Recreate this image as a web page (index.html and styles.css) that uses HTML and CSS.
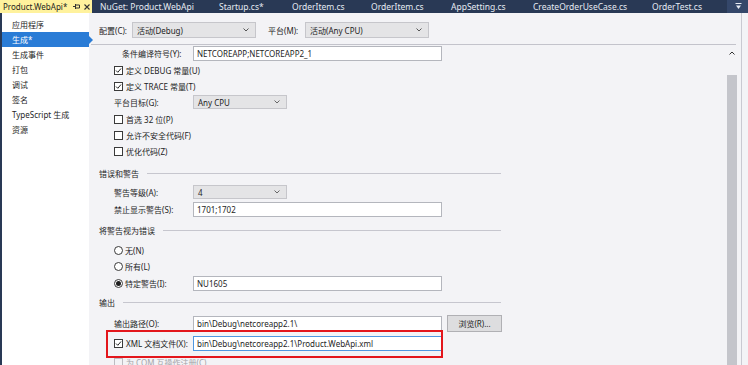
FILE: index.html
```html
<!DOCTYPE html>
<html>
<head>
<meta charset="utf-8">
<link rel="stylesheet" href="styles.css">
</head>
<body>
<div class="win">
  <div class="tabs">
    <div class="tab active">
      <span class="tname">Product.WebApi*</span>
      <svg class="pin" width="7" height="7" viewBox="0 0 7 7"><path d="M0 3.5H2M2.5 1V6M2.5 2H6.5V5H2.5" fill="none" stroke="#333" stroke-width="1"/></svg>
      <svg class="close" width="6" height="6" viewBox="0 0 6 6"><path d="M0.5 0.5L5.5 5.5M5.5 0.5L0.5 5.5" stroke="#333" stroke-width="1.1"/></svg>
    </div>
    <div class="tab t2">NuGet: Product.WebApi</div>
    <div class="tab t3">Startup.cs*</div>
    <div class="tab t4">OrderItem.cs</div>
    <div class="tab t5">OrderItem.cs</div>
    <div class="tab t6">AppSetting.cs</div>
    <div class="tab t7">CreateOrderUseCase.cs</div>
    <div class="tab t8">OrderTest.cs</div>
    <div class="tabfill">
      <svg width="7" height="7" viewBox="0 0 7 7"><path d="M0.5 0.5H6.5" stroke="#e6ebf3" stroke-width="1"/><path d="M1 2.5H6L3.5 6Z" fill="#e6ebf3"/></svg>
    </div>
  </div>
  <div class="main">
    <div class="edge"></div>
    <nav class="nav">
      <div class="item">应用程序</div>
      <div class="item selected">生成*</div>
      <div class="item">生成事件</div>
      <div class="item">打包</div>
      <div class="item">调试</div>
      <div class="item">签名</div>
      <div class="item">TypeScript 生成</div>
      <div class="item">资源</div>
    </nav>
    <div class="content">
      <div class="cfg">
        <span class="cfglbl">配置(C):</span>
        <div class="dd dd-cfg"><span>活动(Debug)</span><svg width="6" height="4" viewBox="0 0 6 4"><path d="M0.5 0.5L3 3L5.5 0.5" fill="none" stroke="#555" stroke-width="1"/></svg></div>
        <span class="cfglbl plat">平台(M):</span>
        <div class="dd dd-cfg"><span>活动(Any CPU)</span><svg width="6" height="4" viewBox="0 0 6 4"><path d="M0.5 0.5L3 3L5.5 0.5" fill="none" stroke="#555" stroke-width="1"/></svg></div>
      </div>
      <div class="hr"></div>
      <div class="bodywrap">
        <div class="form">
          <div class="row">
            <span class="lbl ind">条件编译符号(Y):</span>
            <div class="in">NETCOREAPP;NETCOREAPP2_1</div>
          </div>
          <div class="row mt1">
            <span class="cb on"><svg width="7" height="7" viewBox="0 0 7 7"><path d="M1 3.5L2.8 5.3L6 1.5" fill="none" stroke="#222" stroke-width="1"/></svg></span>
            <span>定义 DEBUG 常量(U)</span>
          </div>
          <div class="row">
            <span class="cb on"><svg width="7" height="7" viewBox="0 0 7 7"><path d="M1 3.5L2.8 5.3L6 1.5" fill="none" stroke="#222" stroke-width="1"/></svg></span>
            <span>定义 TRACE 常量(T)</span>
          </div>
          <div class="row">
            <span class="lbl">平台目标(G):</span>
            <div class="dd dd-sm"><span>Any CPU</span><svg width="6" height="4" viewBox="0 0 6 4"><path d="M0.5 0.5L3 3L5.5 0.5" fill="none" stroke="#666" stroke-width="1"/></svg></div>
          </div>
          <div class="row mt1">
            <span class="cb"></span>
            <span>首选 32 位(P)</span>
          </div>
          <div class="row">
            <span class="cb"></span>
            <span>允许不安全代码(F)</span>
          </div>
          <div class="row">
            <span class="cb"></span>
            <span>优化代码(Z)</span>
          </div>

          <div class="row sec mt6"><span>错误和警告</span></div>
          <div class="row mt3">
            <span class="lbl">警告等级(A):</span>
            <div class="dd dd-sm"><span>4</span><svg width="6" height="4" viewBox="0 0 6 4"><path d="M0.5 0.5L3 3L5.5 0.5" fill="none" stroke="#666" stroke-width="1"/></svg></div>
          </div>
          <div class="row mt1">
            <span class="lbl">禁止显示警告(S):</span>
            <div class="in">1701;1702</div>
          </div>

          <div class="row sec mt5"><span>将警告视为错误</span></div>
          <div class="row mt4">
            <span class="rb"></span>
            <span>无(N)</span>
          </div>
          <div class="row">
            <span class="rb"></span>
            <span>所有(L)</span>
          </div>
          <div class="row mt1">
            <span class="lbl flexlbl"><span class="rb on"></span><span>特定警告(I):</span></span>
            <div class="in">NU1605</div>
          </div>

          <div class="row sec mt3"><span>输出</span></div>
          <div class="row mt5">
            <span class="lbl">输出路径(O):</span>
            <div class="in">bin\Debug\netcoreapp2.1\</div>
            <div class="btn">浏览(R)...</div>
          </div>
          <div class="row mt4 marked">
            <span class="lbl flexlbl"><span class="cb on"><svg width="7" height="7" viewBox="0 0 7 7"><path d="M1 3.5L2.8 5.3L6 1.5" fill="none" stroke="#222" stroke-width="1"/></svg></span><span>XML 文档文件(X):</span></span>
            <div class="in focus">bin\Debug\netcoreapp2.1\Product.WebApi.xml</div>
            <div class="mark"></div>
          </div>
          <div class="row mt3 dis">
            <span class="cb"></span>
            <span>为 COM 互操作注册(C)</span>
          </div>
        </div>
        <div class="sbar">
          <svg class="up" width="6" height="4" viewBox="0 0 6 4"><path d="M0.5 3.5L3 1L5.5 3.5" fill="none" stroke="#333" stroke-width="1"/></svg>
          <div class="thumb"></div>
        </div>
      </div>
    </div>
    <div class="redge"></div>
  </div>
</div>
</body>
</html>
```

FILE: styles.css
```css
* { box-sizing: border-box; }
html, body { margin: 0; padding: 0; }
body {
  width: 748px;
  height: 365px;
  overflow: hidden;
  font-family: "Noto Sans", "Noto Sans CJK SC", sans-serif;
  font-size: 8px;
  color: #1e1e1e;
  background: #f3f3f6;
}
.win { display: flex; flex-direction: column; height: 365px; }

/* tab bar */
.tabs {
  flex: none;
  height: 13px;
  display: flex;
  background: #293955;
  color: #e6ebf3;
  font-size: 8.5px;
}
.tab {
  height: 13px;
  display: flex;
  align-items: center;
  padding-left: 8px;
  white-space: nowrap;
  overflow: hidden;
}
.tab.active {
  width: 92px;
  padding-left: 3px;
  background: #fff29d;
  color: #1e1e1e;
  font-size: 8px;
}
.tab.active .tname { flex: 1; min-width: 0; overflow: hidden; }
.tab.active .pin { flex: none; margin-right: 4px; }
.tab.active .close { flex: none; margin-right: 2px; }
.t2 { width: 119px; }
.t3 { width: 73px; }
.t4 { width: 79px; }
.t5 { width: 80px; }
.t6 { width: 82px; }
.t7 { width: 119px; }
.t8 { width: 83px; }
.tabfill {
  flex: 1;
  background: #34476a;
  display: flex;
  align-items: center;
  padding-left: 8px;
}

/* main */
.main { flex: 1; display: flex; min-height: 0; }
.edge { width: 2px; background: #293955; flex: none; }
.nav {
  width: 87px;
  flex: none;
  background: #fff;
  padding-top: 4px;
}
.item {
  height: 15px;
  line-height: 15px;
  padding-left: 10px;
  white-space: nowrap;
}
.item.selected {
  background: #2a7cd6;
  color: #fff;
  position: relative;
}
.item.selected::after {
  content: "";
  position: absolute;
  right: -4px;
  top: 4px;
  border-left: 4px solid #2a7cd6;
  border-top: 4px solid transparent;
  border-bottom: 4px solid transparent;
}

.content {
  flex: 1;
  display: flex;
  flex-direction: column;
  min-width: 0;
}
.cfg {
  display: flex;
  align-items: center;
  height: 16px;
  margin-top: 9px;
  padding-left: 10px;
}
.cfglbl { width: 33px; }
.cfglbl.plat { margin-left: 12px; width: 37px; }
.dd {
  display: flex;
  align-items: center;
  justify-content: space-between;
  background: #e4e4e6;
  border: 1px solid #c6c6cb;
  padding: 0 6px 0 4px;
}
.dd-cfg { width: 124px; height: 16px; }
.dd-sm { width: 94px; height: 14px; }
.hr {
  height: 1px;
  background: #c3c3cb;
  margin: 6px 5px 0 2px;
}
.bodywrap { flex: 1; display: flex; min-height: 0; }
.form { flex: 1; min-width: 0; }
.row {
  height: 16px;
  display: flex;
  align-items: center;
  white-space: nowrap;
}
.mt1 { margin-top: 1px; }
.mt3 { margin-top: 3px; }
.mt4 { margin-top: 4px; }
.mt5 { margin-top: 5px; }
.mt6 { margin-top: 6px; }
.lbl { width: 104px; padding-left: 25px; flex: none; }
.lbl.ind { padding-left: 33px; }
.flexlbl { display: flex; align-items: center; padding-left: 0; }
.in {
  width: 249px;
  height: 15px;
  flex: none;
  background: #fff;
  border: 1px solid #b4b6bd;
  padding-left: 3px;
  display: flex;
  align-items: center;
  overflow: hidden;
}
.in.focus { border-color: #4f97e0; }
.btn {
  width: 55px;
  height: 17px;
  margin-left: 5px;
  background: #dddddf;
  border: 1px solid #b0b0b4;
  display: flex;
  align-items: center;
  justify-content: center;
}
.cb {
  width: 9px;
  height: 9px;
  flex: none;
  margin-left: 25px;
  margin-right: 3px;
  border: 1px solid #3a3a3a;
  background: #fff;
  display: flex;
  align-items: center;
  justify-content: center;
}
.rb {
  width: 9px;
  height: 9px;
  flex: none;
  margin-left: 25px;
  margin-right: 2px;
  border: 1px solid #3a3a3a;
  border-radius: 50%;
  background: #fff;
  display: flex;
  align-items: center;
  justify-content: center;
}
.rb.on::before {
  content: "";
  width: 5px;
  height: 5px;
  border-radius: 50%;
  background: #1e1e1e;
}
.sec {
  width: 412px;
  padding-left: 10px;
}
.sec::after {
  content: "";
  flex: 1;
  height: 1px;
  background: #c6c6ce;
  margin-left: 8px;
}
.marked { position: relative; }
.mark {
  position: absolute;
  left: 17px;
  top: -5px;
  width: 337px;
  height: 28px;
  border: 2px solid #e3161c;
}
.dis { color: #a4a4a8; }
.dis .cb { border-color: #bdbdc2; background: #f3f3f6; }

.sbar {
  width: 10px;
  flex: none;
  margin-right: 4px;
  display: flex;
  flex-direction: column;
  align-items: center;
}
.sbar .up { margin-top: 6px; flex: none; }
.thumb {
  flex: 1;
  width: 10px;
  margin-top: 20px;
  background: #c4c5cb;
}
.redge {
  width: 7px;
  flex: none;
  border-left: 1px solid #c9c9d1;
}
```
